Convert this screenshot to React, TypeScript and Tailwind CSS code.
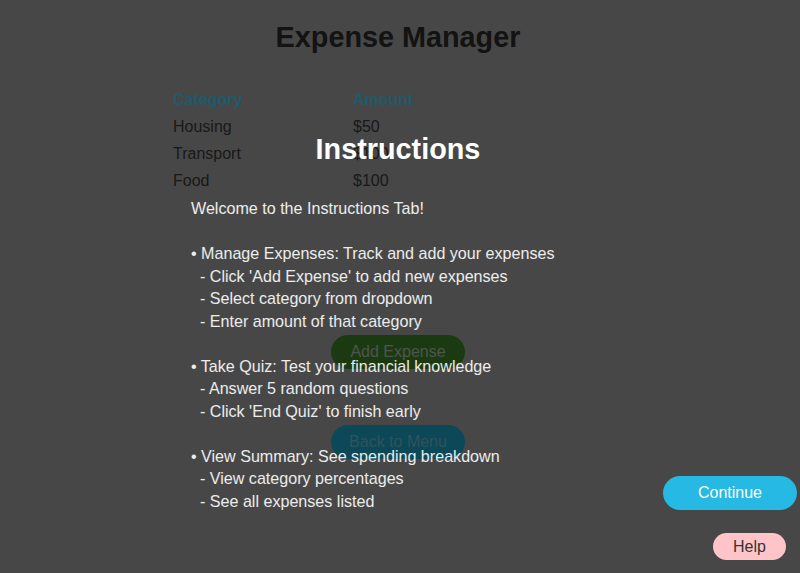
const rows = [
  { category: 'Housing', amount: '$50' },
  { category: 'Transport', amount: '$100' },
  { category: 'Food', amount: '$100' },
];

const instructions = `Welcome to the Instructions Tab!

• Manage Expenses: Track and add your expenses
  - Click 'Add Expense' to add new expenses
  - Select category from dropdown
  - Enter amount of that category

• Take Quiz: Test your financial knowledge
  - Answer 5 random questions
  - Click 'End Quiz' to finish early

• View Summary: See spending breakdown
  - View category percentages
  - See all expenses listed`;

export default function App() {
  return (
    <div className="relative min-h-[573px] w-full overflow-hidden bg-[#8e8e8e] font-['Liberation_Sans',Arial,sans-serif]">
      {/* Page underneath */}
      <div className="flex flex-col items-center pr-1 pt-[21px]">
        <h1 className="text-[28.8px] font-bold leading-[32px] text-[#262626]">Expense Manager</h1>

        <div className="mt-[33px] grid w-[454px] grid-cols-[180px_1fr] pl-[2px] text-[16px] leading-[27px] text-[#333]">
          <div className="font-bold text-[#40b4d4]">Category</div>
          <div className="font-bold text-[#40b4d4]">Amount</div>
          {rows.map(r => (
            <div key={r.category} className="contents">
              <div>{r.category}</div>
              <div>{r.amount}</div>
            </div>
          ))}
        </div>

        <button className="mt-[141px] h-[34px] w-[134px] rounded-full bg-[#387424] text-[16px] text-[#9aaa98]">
          Add Expense
        </button>
        <button className="mt-[56px] h-[34px] w-[134px] rounded-full bg-[#1890b0] text-[16px] text-[#5fa6b8]">
          Back to Menu
        </button>
      </div>

      {/* Instructions overlay */}
      <div className="absolute inset-0 bg-black/50">
        <div className="flex flex-col items-center pr-1 pt-[133px]">
          <h2 className="text-[28.8px] font-bold leading-[32px] text-white">Instructions</h2>
          <div className="mt-[32px] w-[420px] whitespace-pre-wrap pl-[3px] text-[16.1px] leading-[22.5px] text-white/90">
            {instructions}
          </div>
        </div>
      </div>

      <button className="absolute right-[3px] top-[476px] h-[34px] w-[134px] rounded-full bg-[#25b9e3] text-[16px] text-white">
        Continue
      </button>
      <button className="absolute right-[14px] top-[533px] h-[27px] w-[73px] rounded-full bg-[#ffc4c8] text-[16px] text-[#333]">
        Help
      </button>
    </div>
  );
}
